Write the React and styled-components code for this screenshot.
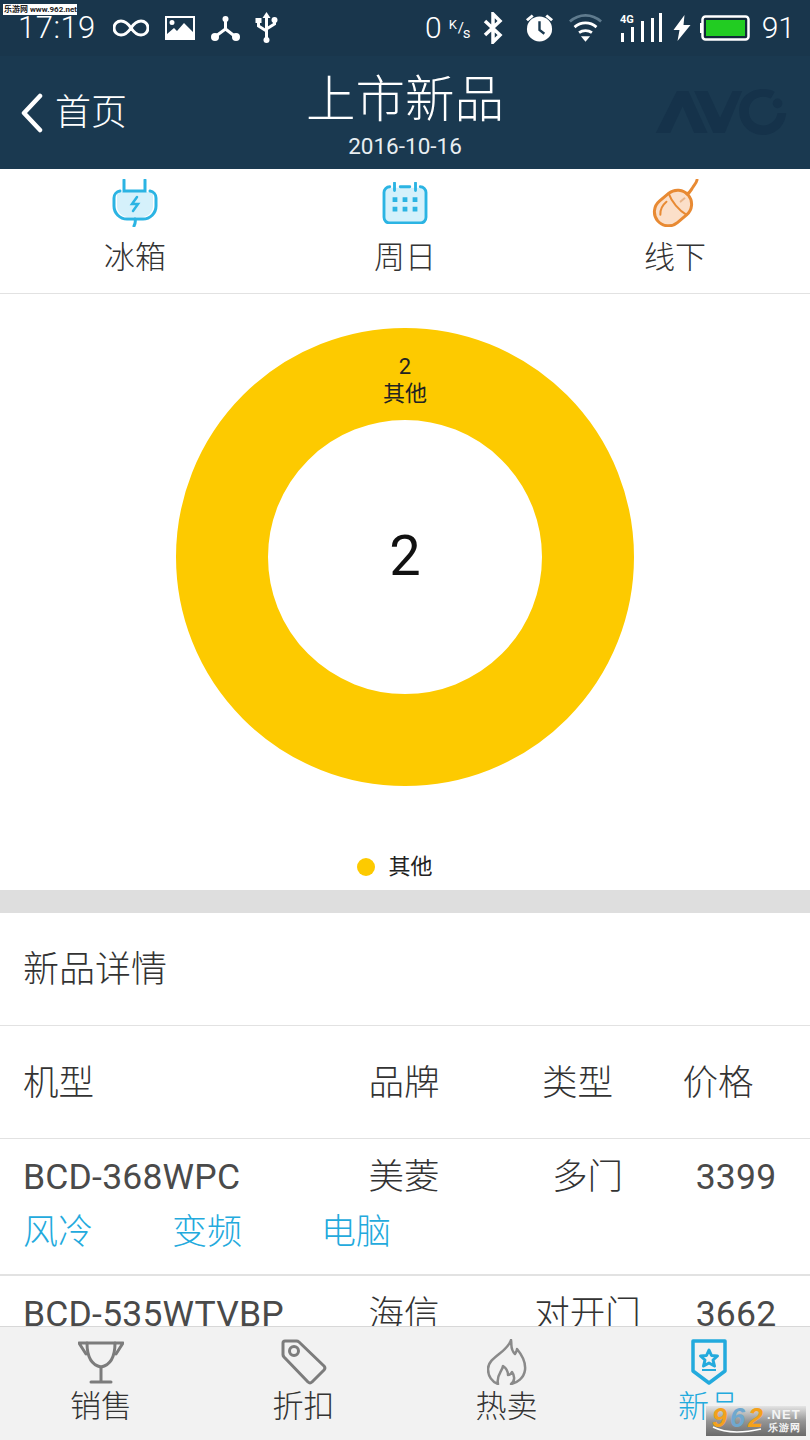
import styled, { createGlobalStyle } from "styled-components";

const Global = createGlobalStyle`
html, body { margin: 0; padding: 0; background: #fff; }
body { font-family: Roboto, "Noto Sans CJK SC", sans-serif; }
* { box-sizing: border-box; }
`

const Page = styled.div`
position: relative;
width: 810px;
height: 1440px;
overflow: hidden;
display: flex;
flex-direction: column;
`
const Header = styled.header`
background: #1a3950;
height: 169px;
flex: none;
color: #fff;
position: relative;
`
const StatusBar = styled.div`
height: 56px;
padding: 0 15px 0 18px;
display: flex;
align-items: center;
justify-content: space-between;
background: #19364c;
`
const StatusGroup = styled.div`
display: flex;
align-items: center;
`
const Slot = styled.span`
display: flex;
align-items: center;
margin-left: ${p => p.$ml || 0}px;
`
const Clock = styled.span`
font-size: 31px;
line-height: 24px;
font-weight: 300;
letter-spacing: 0.5px;
`
const StatusText = styled.span`
font-size: 30px;
line-height: 30px;
font-weight: 300;
`
const SpeedUnit = styled.span`
position: relative;
display: block;
width: 23px;
height: 26px;
font-size: 15px;
line-height: 15px;
font-weight: 400;
`
const UnitK = styled.span`
position: absolute;
left: 0;
top: 2px;
font-size: 13px;
`
const UnitSlash = styled.span`
position: absolute;
left: 9px;
top: 6px;
`
const UnitS = styled.span`
position: absolute;
left: 14px;
top: 11px;
`
const NavBar = styled.div`
height: 113px;
position: relative;
display: flex;
flex-direction: column;
align-items: center;
`
const BackLink = styled.div`
position: absolute;
left: 21px;
top: 35px;
display: flex;
align-items: center;
gap: 12px;
font-size: 36px;
line-height: 44px;
font-weight: 300;
`
const Title = styled.h1`
margin: 14px 0 0;
font-size: 49.5px;
line-height: 60px;
font-weight: 300;
`
const DateText = styled.div`
font-size: 22.5px;
line-height: 28px;
margin-top: 2px;
color: #e8eef2;
`
const Logo = styled.svg`
position: absolute;
right: 22px;
top: 33px;
`
const FilterRow = styled.div`
height: 125px;
flex: none;
display: grid;
grid-template-columns: 270px 270px 270px;
border-bottom: 1px solid #e2e2e2;
`
const Filter = styled.div`
display: flex;
flex-direction: column;
align-items: center;
padding-top: 10px;
font-size: 31px;
line-height: 40px;
color: #333;
font-weight: 300;
`
const FilterIcon = styled.div`
height: 48px;
margin-bottom: 11px;
display: flex;
align-items: center;
`
const ChartArea = styled.div`
height: 596px;
flex: none;
display: flex;
flex-direction: column;
align-items: center;
padding-top: 34px;
`
const Legend = styled.div`
margin: 67px 20px 0 0;
display: flex;
align-items: center;
gap: 13px;
font-size: 22px;
line-height: 28px;
color: #222;
`
const LegendDot = styled.span`
width: 18px;
height: 18px;
border-radius: 50%;
background: #fdca00;
`
const Divider = styled.div`
height: 23px;
flex: none;
background: #dedede;
`
const SectionTitle = styled.div`
height: 113px;
flex: none;
display: flex;
align-items: center;
padding: 0 0 6px 23px;
font-size: 36px;
font-weight: 300;
color: #333;
border-bottom: 1px solid #e2e2e2;
`
const TableRow = styled.div`
display: grid;
align-items: center;
padding-left: 23px;
font-size: 35.5px;
font-weight: 300;
color: #333;
`
const HeadRow = styled(TableRow)`
grid-template-columns: 271px 220px 127px 154px;
height: 113px;
padding-bottom: 6px;
flex: none;
border-bottom: 1px solid #e2e2e2;
`
const Cell = styled.span`
text-align: ${p => (p.$left ? "left" : "center")};
font-weight: ${p => (p.$latin ? 400 : 300)};
color: ${p => (p.$latin ? "#4a4a4a" : "#333")};
letter-spacing: ${p => (p.$latin ? "0.2px" : "0")};
white-space: nowrap;
`
const Item = styled.div`
flex: none;
height: 137px;
padding-top: 14px;
border-bottom: 2px solid #e2e2e2;
`
const ItemRow = styled(TableRow)`
grid-template-columns: 271px 220px 147px 150px;
line-height: 48px;
`
const Tags = styled.div`
display: flex;
gap: 79px;
padding: 8px 0 0 23px;
font-size: 35px;
line-height: 48px;
font-weight: 300;
color: #23aadd;
`
const TabBar = styled.nav`
position: absolute;
left: 0;
right: 0;
bottom: 0;
height: 114px;
background: #f2f2f2;
border-top: 1px solid #d8d8d8;
display: grid;
grid-template-columns: 202px 203px 203px 202px;
`
const Tab = styled.div`
display: flex;
flex-direction: column;
align-items: center;
padding-top: 12px;
font-size: 31px;
line-height: 40px;
font-weight: 300;
color: ${p => (p.$active ? "#23aadd" : "#333")};
`
const TabIcon = styled.div`
height: 46px;
margin-bottom: 2px;
display: flex;
align-items: center;
`
const SiteStamp = styled.div`
position: absolute;
left: 3px;
top: 4px;
width: 74px;
height: 11px;
background: #fff;
color: #222;
font-size: 8px;
line-height: 11px;
font-weight: 700;
white-space: nowrap;
overflow: hidden;
padding-left: 1px;
`
const Badge = styled.div`
position: absolute;
right: 4px;
bottom: 4px;
width: 100px;
height: 30px;
background: linear-gradient(#e4e4e4, #959595 50%, #6a6a6a);
display: flex;
align-items: flex-start;
padding-left: 6px;
font-family: "Liberation Sans", sans-serif;
font-weight: 700;
`
const BadgeNum = styled.span`
font-size: 27px;
line-height: 24px;
width: 18px;
font-style: italic;
color: ${p => p.$color};
`
const BadgeSide = styled.span`
display: flex;
flex-direction: column;
margin: 2px 0 0 1px;
font-size: 13px;
line-height: 13px;
letter-spacing: 1px;
color: #f4f4f4;
`
const BadgeCn = styled.span`
font-size: 10px;
letter-spacing: 1px;
margin-left: 1px;
`
const BadgeSwoosh = styled.svg`
position: absolute;
left: 6px;
bottom: 2px;
`

function StatusIcons() {
  return (
    <StatusGroup>
      <Clock>17:19</Clock>
      <Slot $ml={17}>
        <svg width="36" height="20" viewBox="0 0 36 20" fill="none" stroke="#fff" strokeWidth="3">
          <path d="M18 10C14 4 11 3 8 3a7 7 0 0 0 0 14c3 0 6-1 10-7s7-7 10-7a7 7 0 0 1 0 14c-3 0-6-1-10-7z" />
        </svg>
      </Slot>
      <Slot $ml={16}>
        <svg width="30" height="24" viewBox="0 0 30 24">
          <path fill="#fff" fillRule="evenodd" d="M0 0h30v24H0zM2 2v16l7-6 3 3 7-8 9 9V2zM7 4a2.500 2.500 0 1 1 0 5 2.500 2.500 0 0 1 0-5z" />
        </svg>
      </Slot>
      <Slot $ml={16}>
        <svg width="29" height="26" viewBox="0 0 29 26" fill="none" stroke="#fff" strokeWidth="3">
          <path d="M14.500 4v10L5 21M14.500 14l9 7" />
          <circle cx="14.500" cy="4" r="3" fill="#fff" stroke="none" />
          <circle cx="4" cy="22" r="4" fill="#fff" stroke="none" />
          <circle cx="25" cy="22" r="4" fill="#fff" stroke="none" />
        </svg>
      </Slot>
      <Slot $ml={15}>
        <svg width="23" height="32" viewBox="0 0 22 32" fill="none" stroke="#fff" strokeWidth="3">
          <path d="M11 4v24M3 9v5l8 5M19 9v3l-8 5" />
          <path d="M11 0l4 6H7z" fill="#fff" stroke="none" />
          <rect x="0" y="6" width="6" height="5" fill="#fff" stroke="none" />
          <circle cx="19" cy="8" r="3" fill="#fff" stroke="none" />
          <circle cx="11" cy="28" r="3" fill="#fff" stroke="none" />
        </svg>
      </Slot>
    </StatusGroup>
  )
}

function SystemIcons() {
  return (
    <StatusGroup>
      <StatusText>0</StatusText>
      <Slot $ml={7}>
        <SpeedUnit><UnitK>K</UnitK><UnitSlash>/</UnitSlash><UnitS>s</UnitS></SpeedUnit>
      </Slot>
      <Slot $ml={11}>
        <svg width="20" height="32" viewBox="0 0 20 32" fill="none" stroke="#fff" strokeWidth="3.500">
          <path d="M2 9l15 14-7 7V2l7 7L2 23" />
        </svg>
      </Slot>
      <Slot $ml={22}>
        <svg width="29" height="30" viewBox="0 0 30 30">
          <circle cx="15" cy="16" r="13" fill="#fff" />
          <path d="M15 8v9l5 4" fill="none" stroke="#1a3950" strokeWidth="2.500" />
          <path d="M1 6l6-5 2 2-6 5zM29 6l-6-5-2 2 6 5z" fill="#fff" />
        </svg>
      </Slot>
      <Slot $ml={15}>
        <svg width="33" height="30" viewBox="0 0 36 30" fill="none">
          <path d="M1 8C11-1 25-1 35 8" stroke="#5f7b8e" strokeWidth="3" />
          <path d="M6 14c7-6 17-6 24 0" stroke="#fff" strokeWidth="3" />
          <path d="M11 20c4-3 10-3 14 0" stroke="#fff" strokeWidth="3" />
          <path d="M13 24h10l-5 6z" fill="#fff" />
        </svg>
      </Slot>
      <Slot $ml={18}>
        <svg width="42" height="30" viewBox="0 0 42 30">
          <text x="0" y="10" fill="#fff" fontSize="11" fontWeight="700" fontFamily="Roboto, sans-serif">4G</text>
          <path fill="#fff" d="M1 20h3v9H1zM11 14h3v15h-3zM21 8h3v21h-3zM31 5h3v24h-3zM39 0h3v29h-3z" />
        </svg>
      </Slot>
      <Slot $ml={11}>
        <svg width="18" height="26" viewBox="0 0 17 26">
          <path fill="#fff" d="M11 0L0 15h6l-2 11 13-16h-7z" />
        </svg>
      </Slot>
      <Slot $ml={9}>
        <svg width="50" height="26" viewBox="0 0 50 26">
          <rect x="0" y="8" width="2" height="10" fill="#fff" />
          <rect x="2.500" y="1.500" width="46" height="23" rx="3" fill="#12283a" stroke="#fff" strokeWidth="2.500" />
          <rect x="6" y="5" width="39" height="16" fill="#22cc22" />
        </svg>
      </Slot>
      <Slot $ml={12}>
        <StatusText>91</StatusText>
      </Slot>
    </StatusGroup>
  )
}

const FilterIcons = {
  plug: (
    <svg width="46" height="48" viewBox="0 0 46 48" fill="none" stroke="#2bb4e3" strokeWidth="3" strokeLinecap="round">
      <path d="M5 13h36v14a11 11 0 0 1-11 11H16A11 11 0 0 1 5 27z" fill="#d5f1fb" stroke="none" />
      <path d="M8 12a7 7 0 0 0-6 7v8a13 13 0 0 0 13 13h16a13 13 0 0 0 13-13v-8a7 7 0 0 0-6-7" />
      <path d="M12 1v11h21V1M23 40c1 3 0 5-1 7" />
      <path d="M25 18l-5 7h6l-5 7" strokeWidth="2.500" />
    </svg>
  ),
  calendar: (
    <svg width="46" height="42" viewBox="0 0 48 44" fill="none" stroke="#2bb4e3" strokeWidth="3" strokeLinecap="round">
      <rect x="2" y="6" width="44" height="36" rx="6" fill="#d5f1fb" stroke="none" />
      <path d="M8 5a6 6 0 0 0-6 6v26a6 6 0 0 0 6 6h32a6 6 0 0 0 6-6V11a6 6 0 0 0-6-6" />
      <path d="M13 1v8M35 1v8M19 5h10" />
      <path stroke="none" fill="#2bb4e3" d="M11 16h5v5h-5zM21.500 16h5v5h-5zM32 16h5v5h-5zM11 26h5v5h-5zM21.500 26h5v5h-5zM32 26h5v5h-5z" />
    </svg>
  ),
  mouse: (
    <svg width="48" height="48" viewBox="0 0 48 48" fill="none" stroke="#e88a33" strokeWidth="3" strokeLinecap="round">
      <g transform="rotate(50 22 29)">
        <rect x="8" y="9" width="28" height="40" rx="14" fill="#fbdfc9" />
        <path d="M8 23c8 3 20 3 28 0" strokeWidth="2" />
        <path d="M22 14v5" strokeWidth="2" stroke="#e8b48a" />
        <path d="M13 30c0 6 2 10 6 13" strokeWidth="2" />
      </g>
      <path d="M36 15c3-1 4-4 6-7 1-2 3-3 4-7" />
    </svg>
  ),
}

const TabIcons = {
  trophy: (
    <svg width="46" height="44" viewBox="0 0 46 44" fill="none" stroke="#7c7c7c" strokeWidth="3" strokeLinecap="round" strokeLinejoin="round">
      <path d="M9 3h28c0 14-4 22-14 24C13 25 9 17 9 3z" />
      <path d="M9 3H1l7 11M37 3h8l-7 11M23 27v15M13 42h20" />
    </svg>
  ),
  tag: (
    <svg width="46" height="46" viewBox="0 0 46 46" fill="none" stroke="#7c7c7c" strokeWidth="3" strokeLinejoin="round">
      <path d="M4 2h11a4 4 0 0 1 3 1l25 24a3 3 0 0 1 0 4L31 43a3 3 0 0 1-4 0L3 18a4 4 0 0 1-1-3V4a2 2 0 0 1 2-2z" />
      <circle cx="13" cy="12" r="4.500" />
    </svg>
  ),
  flame: (
    <svg width="40" height="46" viewBox="0 0 40 46" fill="none" stroke="#8a8a8a" strokeWidth="2.500" strokeLinejoin="round">
      <path d="M24 1c1 6-1 9 4 14 1-2 2-3 2-5 5 6 9 13 8 21-1 8-8 13-14 14 4-3 4-8 1-12-1 2-2 3-4 3 0-4-2-7-5-9-1 6-7 9-5 18C5 43 1 37 1 30 1 18 20 14 24 1z" />
    </svg>
  ),
  badge: (
    <svg width="36" height="46" viewBox="0 0 36 46" fill="none" stroke="#23aadd" strokeWidth="3.500" strokeLinejoin="round">
      <path d="M2 2h32v30L18 44 2 32z" />
      <path strokeWidth="3" d="M18 11l2.500 5.500 6 .5-4.500 4 1.500 6-5.500-3-5.500 3 1.500-6-4.500-4 6-.5z" />
      <path strokeWidth="2" d="M11 31h14" />
    </svg>
  ),
}

function Donut() {
  return (
    <svg width="458" height="458" viewBox="0 0 458 458">
      <circle cx="229" cy="229" r="183" fill="none" stroke="#fdca00" strokeWidth="92" />
      <text x="229" y="46" textAnchor="middle" fontSize="22" fill="#222">2</text>
      <text x="229" y="73" textAnchor="middle" fontSize="22" fill="#222">其他</text>
      <text x="229" y="247" textAnchor="middle" fontSize="56" fill="#111">2</text>
    </svg>
  )
}

export default function App() {
  return (
    <Page>
      <Global />
      <Header>
        <StatusBar>
          <StatusIcons />
          <SystemIcons />
        </StatusBar>
        <NavBar>
          <BackLink>
            <svg width="22" height="40" viewBox="0 0 22 40" fill="none" stroke="#fff" strokeWidth="4.500" strokeLinecap="round" strokeLinejoin="round">
              <path d="M19 3L3 20l16 17" />
            </svg>
            首页
          </BackLink>
          <Title>上市新品</Title>
          <DateText>2016-10-16</DateText>
          <Logo width="134" height="46" viewBox="0 0 136 48" fill="#15324a">
            <path d="M0 46L22 2h12l20 44H40l-12-28-13 28z" />
            <path d="M40 2h14l13 28L80 2h10L72 46H60z" />
            <path fillRule="evenodd" d="M112 0c5 0 9 1 12 3l-4 7c-2-1-5-2-8-2-9 0-15 7-15 15s6 15 15 15c8 0 14-6 15-13h9c-1 13-11 23-24 23-14 0-25-11-25-25S98 0 112 0z" />
            <circle cx="127" cy="15" r="5" />
          </Logo>
        </NavBar>
      </Header>
      <FilterRow>
        <Filter><FilterIcon>{FilterIcons.plug}</FilterIcon>冰箱</Filter>
        <Filter><FilterIcon>{FilterIcons.calendar}</FilterIcon>周日</Filter>
        <Filter><FilterIcon>{FilterIcons.mouse}</FilterIcon>线下</Filter>
      </FilterRow>
      <ChartArea>
        <Donut />
        <Legend><LegendDot />其他</Legend>
      </ChartArea>
      <Divider />
      <SectionTitle>新品详情</SectionTitle>
      <HeadRow>
        <Cell $left>机型</Cell>
        <Cell>品牌</Cell>
        <Cell>类型</Cell>
        <Cell>价格</Cell>
      </HeadRow>
      <Item>
        <ItemRow>
          <Cell $left $latin>BCD-368WPC</Cell>
          <Cell>美菱</Cell>
          <Cell>多门</Cell>
          <Cell $latin>3399</Cell>
        </ItemRow>
        <Tags><span>风冷</span><span>变频</span><span>电脑</span></Tags>
      </Item>
      <Item>
        <ItemRow>
          <Cell $left $latin>BCD-535WTVBP</Cell>
          <Cell>海信</Cell>
          <Cell>对开门</Cell>
          <Cell $latin>3662</Cell>
        </ItemRow>
      </Item>
      <TabBar>
        <Tab><TabIcon>{TabIcons.trophy}</TabIcon>销售</Tab>
        <Tab><TabIcon>{TabIcons.tag}</TabIcon>折扣</Tab>
        <Tab><TabIcon>{TabIcons.flame}</TabIcon>热卖</Tab>
        <Tab $active><TabIcon>{TabIcons.badge}</TabIcon>新品</Tab>
      </TabBar>
      <SiteStamp>乐游网 www.962.net</SiteStamp>
      <Badge>
        <BadgeNum $color="#f3a11c">9</BadgeNum>
        <BadgeNum $color="#6fa8cf">6</BadgeNum>
        <BadgeNum $color="#f3a11c">2</BadgeNum>
        <BadgeSide><span>.NET</span><BadgeCn>乐游网</BadgeCn></BadgeSide>
        <BadgeSwoosh width="50" height="8" viewBox="0 0 50 8" fill="none" stroke="#fff" strokeWidth="1.500">
          <path d="M1 1c12 6 30 6 48 2" />
        </BadgeSwoosh>
      </Badge>
    </Page>
  )
}
